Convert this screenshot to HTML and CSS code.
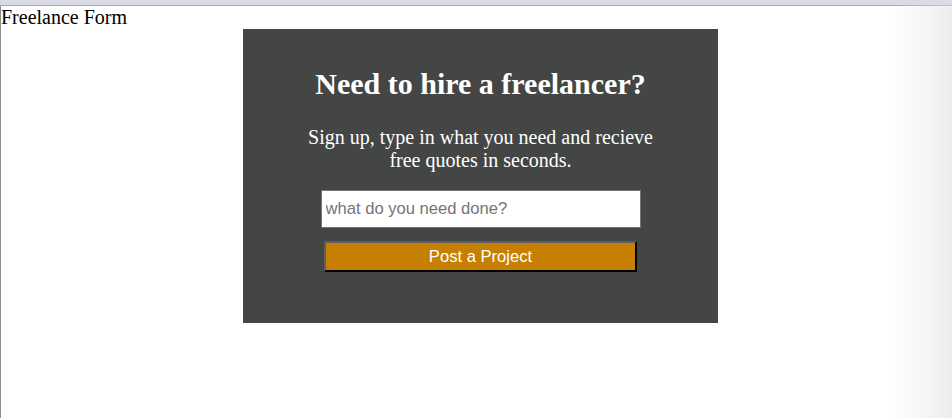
FILE: index.html
```html
<!DOCTYPE html>
<html>
<head>
<meta charset="utf-8">
<title>Freelance Form</title>
<link rel="stylesheet" href="styles.css">
</head>
<body>
<div class="topbar"></div>
<div class="page">
  <div class="title">Freelance Form</div>
  <div class="wrap">
    <div class="card">
      <h1 class="heading">Need to hire a freelancer?</h1>
      <p class="lead">Sign up, type in what you need and recieve free quotes in seconds.</p>
      <input class="field" type="text" placeholder="what do you need done?">
      <button class="btn" type="button">Post a Project</button>
    </div>
  </div>
</div>
<div class="shade"></div>
</body>
</html>
```
FILE: styles.css
```css
html, body {
  margin: 0;
  padding: 0;
  height: 100%;
  background: #ffffff;
  overflow: hidden;
}
body {
  font-family: "Liberation Serif", "Times New Roman", serif;
  color: #000;
  display: flex;
  flex-direction: column;
}
.topbar {
  height: 5px;
  background: #d8dbe6;
  border-bottom: 1px solid #a9a9b3;
  flex: none;
}
.page {
  flex: 1;
  border-left: 1px solid #8c8c8c;
}
.title {
  font-size: 20px;
  line-height: 23px;
}
.wrap {
  display: flex;
  padding-left: 242px;
}
.card {
  width: 475px;
  height: 294px;
  box-sizing: border-box;
  background: #434645;
  color: #ffffff;
  display: flex;
  flex-direction: column;
  align-items: center;
  padding-top: 36px;
  text-align: center;
}
.heading {
  margin: 0;
  font-size: 30px;
  line-height: 37px;
  font-weight: bold;
}
.lead {
  margin: 24px 0 0;
  font-size: 20px;
  line-height: 23px;
  width: 360px;
}
.field {
  margin-top: 18px;
  width: 320px;
  height: 38px;
  box-sizing: border-box;
  border: 1px solid #767676;
  padding: 0 4px;
  font-family: "Liberation Sans", Arial, sans-serif;
  font-size: 16.6px;
  color: #000;
  background: #fff;
}
.field::placeholder {
  color: #757575;
}
.btn {
  margin-top: 13px;
  width: 313px;
  height: 31px;
  box-sizing: border-box;
  background: #c67f00;
  border: 2px solid #000;
  border-top-color: #5e5e5e;
  border-left-color: #5e5e5e;
  color: #ffffff;
  font-family: "Liberation Sans", Arial, sans-serif;
  font-size: 16.6px;
  padding: 0;
}
.shade {
  position: fixed;
  top: 0;
  right: 0;
  width: 60px;
  height: 100%;
  background: linear-gradient(to right, rgba(220,220,220,0), rgba(220,220,220,0.5));
  pointer-events: none;
}
```
